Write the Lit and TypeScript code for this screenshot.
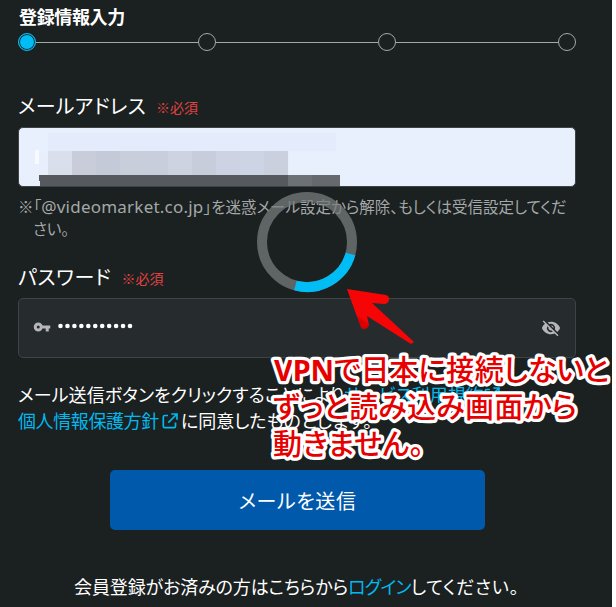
import { LitElement, html, css, svg } from "lit";
import { customElement } from "lit/decorators.js";

const externalIcon = html`<svg class="ext" viewBox="0 0 16 16"><path d="M6 2.5H2.8Q1.3 2.5 1.3 4v9.2q0 1.5 1.5 1.5H12q1.5 0 1.5-1.5V9.5M9.3 1H15v5.7M15 1L6.3 9.7" /></svg>`;

@customElement("app-root")
export class AppRoot extends LitElement {
  static styles = css`
    :host { display: block; width: 616px; height: 607px; background: #fff; overflow: hidden; position: relative; }
    .page { box-sizing: border-box; width: 612px; height: 607px; padding: 4px 36px 0 18px; background: #1b2020; color: #fff; overflow: hidden;
      font-family: "Noto Sans CJK JP", sans-serif; font-feature-settings: "palt"; white-space: nowrap; }
    .title { font-size: 18px; line-height: 24px; height: 29px; font-weight: 700; padding-left: 1px; letter-spacing: -0.35px; }
    .steps { display: flex; align-items: center; height: 18px; }
    .dot { box-sizing: border-box; width: 18px; height: 18px; border: 1px solid #a4a8a8; border-radius: 50%; flex: none; }
    .dot.on { border-color: #00bdf5; background: #00bdf5; box-shadow: inset 0 0 0 1px #1b2020; }
    .line { height: 1px; background: #a4a8a8; flex: 1; }
    .label { display: flex; align-items: baseline; gap: 10px; font-size: 20px; line-height: 28px; height: 35px; }
    .l1 { letter-spacing: 0.3px; }
    .l2 { letter-spacing: 0.65px; }
    .email { margin-top: 41px; }
    .req { font-size: 14px; color: #e04343; position: relative; top: -1px; }
    .field { box-sizing: border-box; height: 60px; border: 1px solid #3f4345; border-radius: 5px; background: #262b2e; position: relative; display: flex; align-items: center; justify-content: space-between; padding: 0 14px; overflow: hidden; }
    .filled { background: #e8f0fe; padding: 0; }
    .mosaic { width: 100%; height: 100%; display: block; }
    .note { margin-top: 8px; font-size: 15.5px; line-height: 22px; color: #a4a8a8; height: 45px; }
    .note div { height: 21.5px; }
    .latin { font-family: "Noto Sans", sans-serif; font-size: 17px; letter-spacing: 0.22px; line-height: 1; }
    .note div + div { padding-left: 15px; }
    .pw { margin-top: 23px; }
    .secret { display: flex; align-items: center; gap: 6px; }
    .bullets { width: 78px; height: 18px; display: block; margin-top: -5px; }
    .key { width: 18px; height: 18px; margin-top: -3px; }
    .eye { width: 20px; height: 20px; }
    .terms { margin-top: 23px; font-size: 18px; line-height: 26px; }
    .t1 { letter-spacing: 0.08px; }
    .t3 { letter-spacing: -0.4px; }
    .link { color: #00b9ef; }
    .ext { width: 16px; height: 16px; fill: none; stroke: #00b9ef; stroke-width: 1.7; margin: 0 3px 0 3px; vertical-align: -1px; }
    .terms div:first-child .ext { margin-left: 0; }
    .send { width: 375px; height: 60px; margin: 37px 0 0 92px; border-radius: 5px; background: #0059aa; display: flex; align-items: center; justify-content: center; font-size: 20px; letter-spacing: 0.6px; }
    .login { margin-top: 43px; padding-left: 56px; font-size: 18px; line-height: 26px; }
    .g1 { letter-spacing: -0.12px; }
    .g2 { letter-spacing: -0.7px; }
    .g3 { letter-spacing: 0.7px; }
    .overlay { position: absolute; left: 0; top: 0; width: 616px; height: 607px; }
    .halo { fill: #fff; stroke: #fff; stroke-width: 6.5px; }
    .ink { fill: #e60000; stroke: #e60000; stroke-width: 0.5px; }
    .callout { font-family: "Noto Sans", "Noto Sans CJK JP", sans-serif; font-feature-settings: "palt"; font-size: 29px; font-weight: 700; fill: #e60000; stroke: #fff; stroke-width: 6.5px; stroke-linejoin: round; paint-order: stroke; }
    .jp { font-family: "Noto Sans CJK JP", sans-serif; font-weight: 500; }
  `;

  render() {
    const tiles = ["#d9e0ec", "#c8cdd9", "#c5cad8", "#c9cedb", "#c9cedc", "#cdd3e1", "#c8cddb", "#cdd3e2", "#cdd4e3", "#cbd0df"];
    return html`
      <div class="page">
        <div class="title">登録情報入力</div>
        <div class="steps">
          <i class="dot on"></i><i class="line"></i><i class="dot"></i><i class="line"></i><i class="dot"></i><i class="line"></i><i class="dot"></i>
        </div>
        <div class="label email"><span class="l1">メールアドレス</span><span class="req">※必須</span></div>
        <div class="field filled">
          <svg class="mosaic" viewBox="19 128 556 58">
            <rect x="35" y="150" width="4" height="14" fill="#f7faff" />
            <rect x="48" y="133" width="288" height="18" fill="#e4ebfa" />
            <rect x="39" y="151" width="9" height="24" fill="#e7effc" />
            ${tiles.map((c, i) => svg`<rect x=${48 + i * 24} y="151" width="24.1" height="24" fill=${c} />`)}
            <rect x="39" y="175" width="301" height="6" fill="#565a5f" />
            <rect x="40" y="175" width="248" height="11" fill="#565a5f" />
            <rect x="288" y="175" width="24" height="11" fill="#6c7175" />
            <rect x="312" y="175" width="28" height="11" fill="#666a6e" />
          </svg>
        </div>
        <div class="note"><div><span>※「</span><span class="latin">@videomarket.co.jp</span><span>」を迷惑メール設定から解除、もしくは受信設定してくだ</span></div><div>さい。</div></div>
        <div class="label pw"><span class="l2">パスワード</span><span class="req">※必須</span></div>
        <div class="field">
          <div class="secret">
            <svg class="key" viewBox="0 0 24 24"><path fill="#b4b6b8" d="M12.65 10A6 6 0 0 0 7 6a6 6 0 0 0 0 12 6 6 0 0 0 5.65-4H17v4h4v-4h2v-4zM7 14a2 2 0 1 1 0-4 2 2 0 0 1 0 4z" /></svg>
            <svg class="bullets" viewBox="0 0 78 18">${Array.from({ length: 11 }, (_, i) => svg`<circle cx=${3.5 + i * 6.95} cy="9" r="2.3" fill="#fff" />`)}</svg>
          </div>
          <svg class="eye" viewBox="0 0 24 24"><path fill="#b4b6b8" d="M12 7a5 5 0 0 1 4.64 6.83l2.92 2.92A11.8 11.8 0 0 0 23 12C21.27 7.61 17 4.5 12 4.5c-1.4 0-2.74.25-3.98.7l2.16 2.16C10.74 7.13 11.35 7 12 7zM2 4.27l2.74 2.74A11.8 11.8 0 0 0 1 12c1.73 4.39 6 7.5 11 7.5 1.55 0 3.03-.3 4.38-.84L19.73 22 21 20.73 3.27 3zM7.53 9.8l1.55 1.55a3 3 0 0 0 3.57 3.57l1.55 1.55A5 5 0 0 1 7.53 9.8zm4.31-.78l3.15 3.15A3 3 0 0 0 12 9z" /></svg>
        </div>
        <div class="terms">
          <div><span class="t1">メール送信ボタンをクリックすることにより</span><span class="link">サービス利用規約</span>${externalIcon}</div>
          <div><span class="link t3">個人情報保護方針</span>${externalIcon}<span>に同意したものとします。</span></div>
        </div>
        <div class="send">メールを送信</div>
        <div class="login"><span class="g1">会員登録がお済みの方はこちらから</span><span class="link g2">ログイン</span><span class="g3">してください。</span></div>
      </div>
      <svg class="overlay" viewBox="0 0 616 607">
        <defs><linearGradient id="red" x1="0" y1="1" x2=".6" y2=".3"><stop offset=".5" stop-color="#d90000" /><stop offset=".55" stop-color="#f50505" /></linearGradient></defs>
        <circle cx="307" cy="242" r="45" fill="none" stroke="#777b7c" stroke-opacity=".75" stroke-width="10" />
        <path d="M350.5 254A45 45 0 0 1 295.4 285.5" fill="none" stroke="#00bdf5" stroke-width="10" />
        <path d="M347 289L386 295Q390 297 389 300Q388 304 384 304L372 303L414 342L411 344L367 316L369 325Q368 329 364 329Q361 329 360 325Z" fill="url(#red)" />
        <text class="callout" x="274" y="380.5" textLength="335" lengthAdjust="spacing">VPN<tspan class="jp">で日本に接続しないと</tspan></text>
        <text class="callout jp" x="273" y="418" textLength="304" lengthAdjust="spacing">ずっと読み込み画面から</text>
        <text class="callout jp" x="273" y="455" textLength="151" lengthAdjust="spacing">動きません。</text>
      </svg>
    `;
  }
}
